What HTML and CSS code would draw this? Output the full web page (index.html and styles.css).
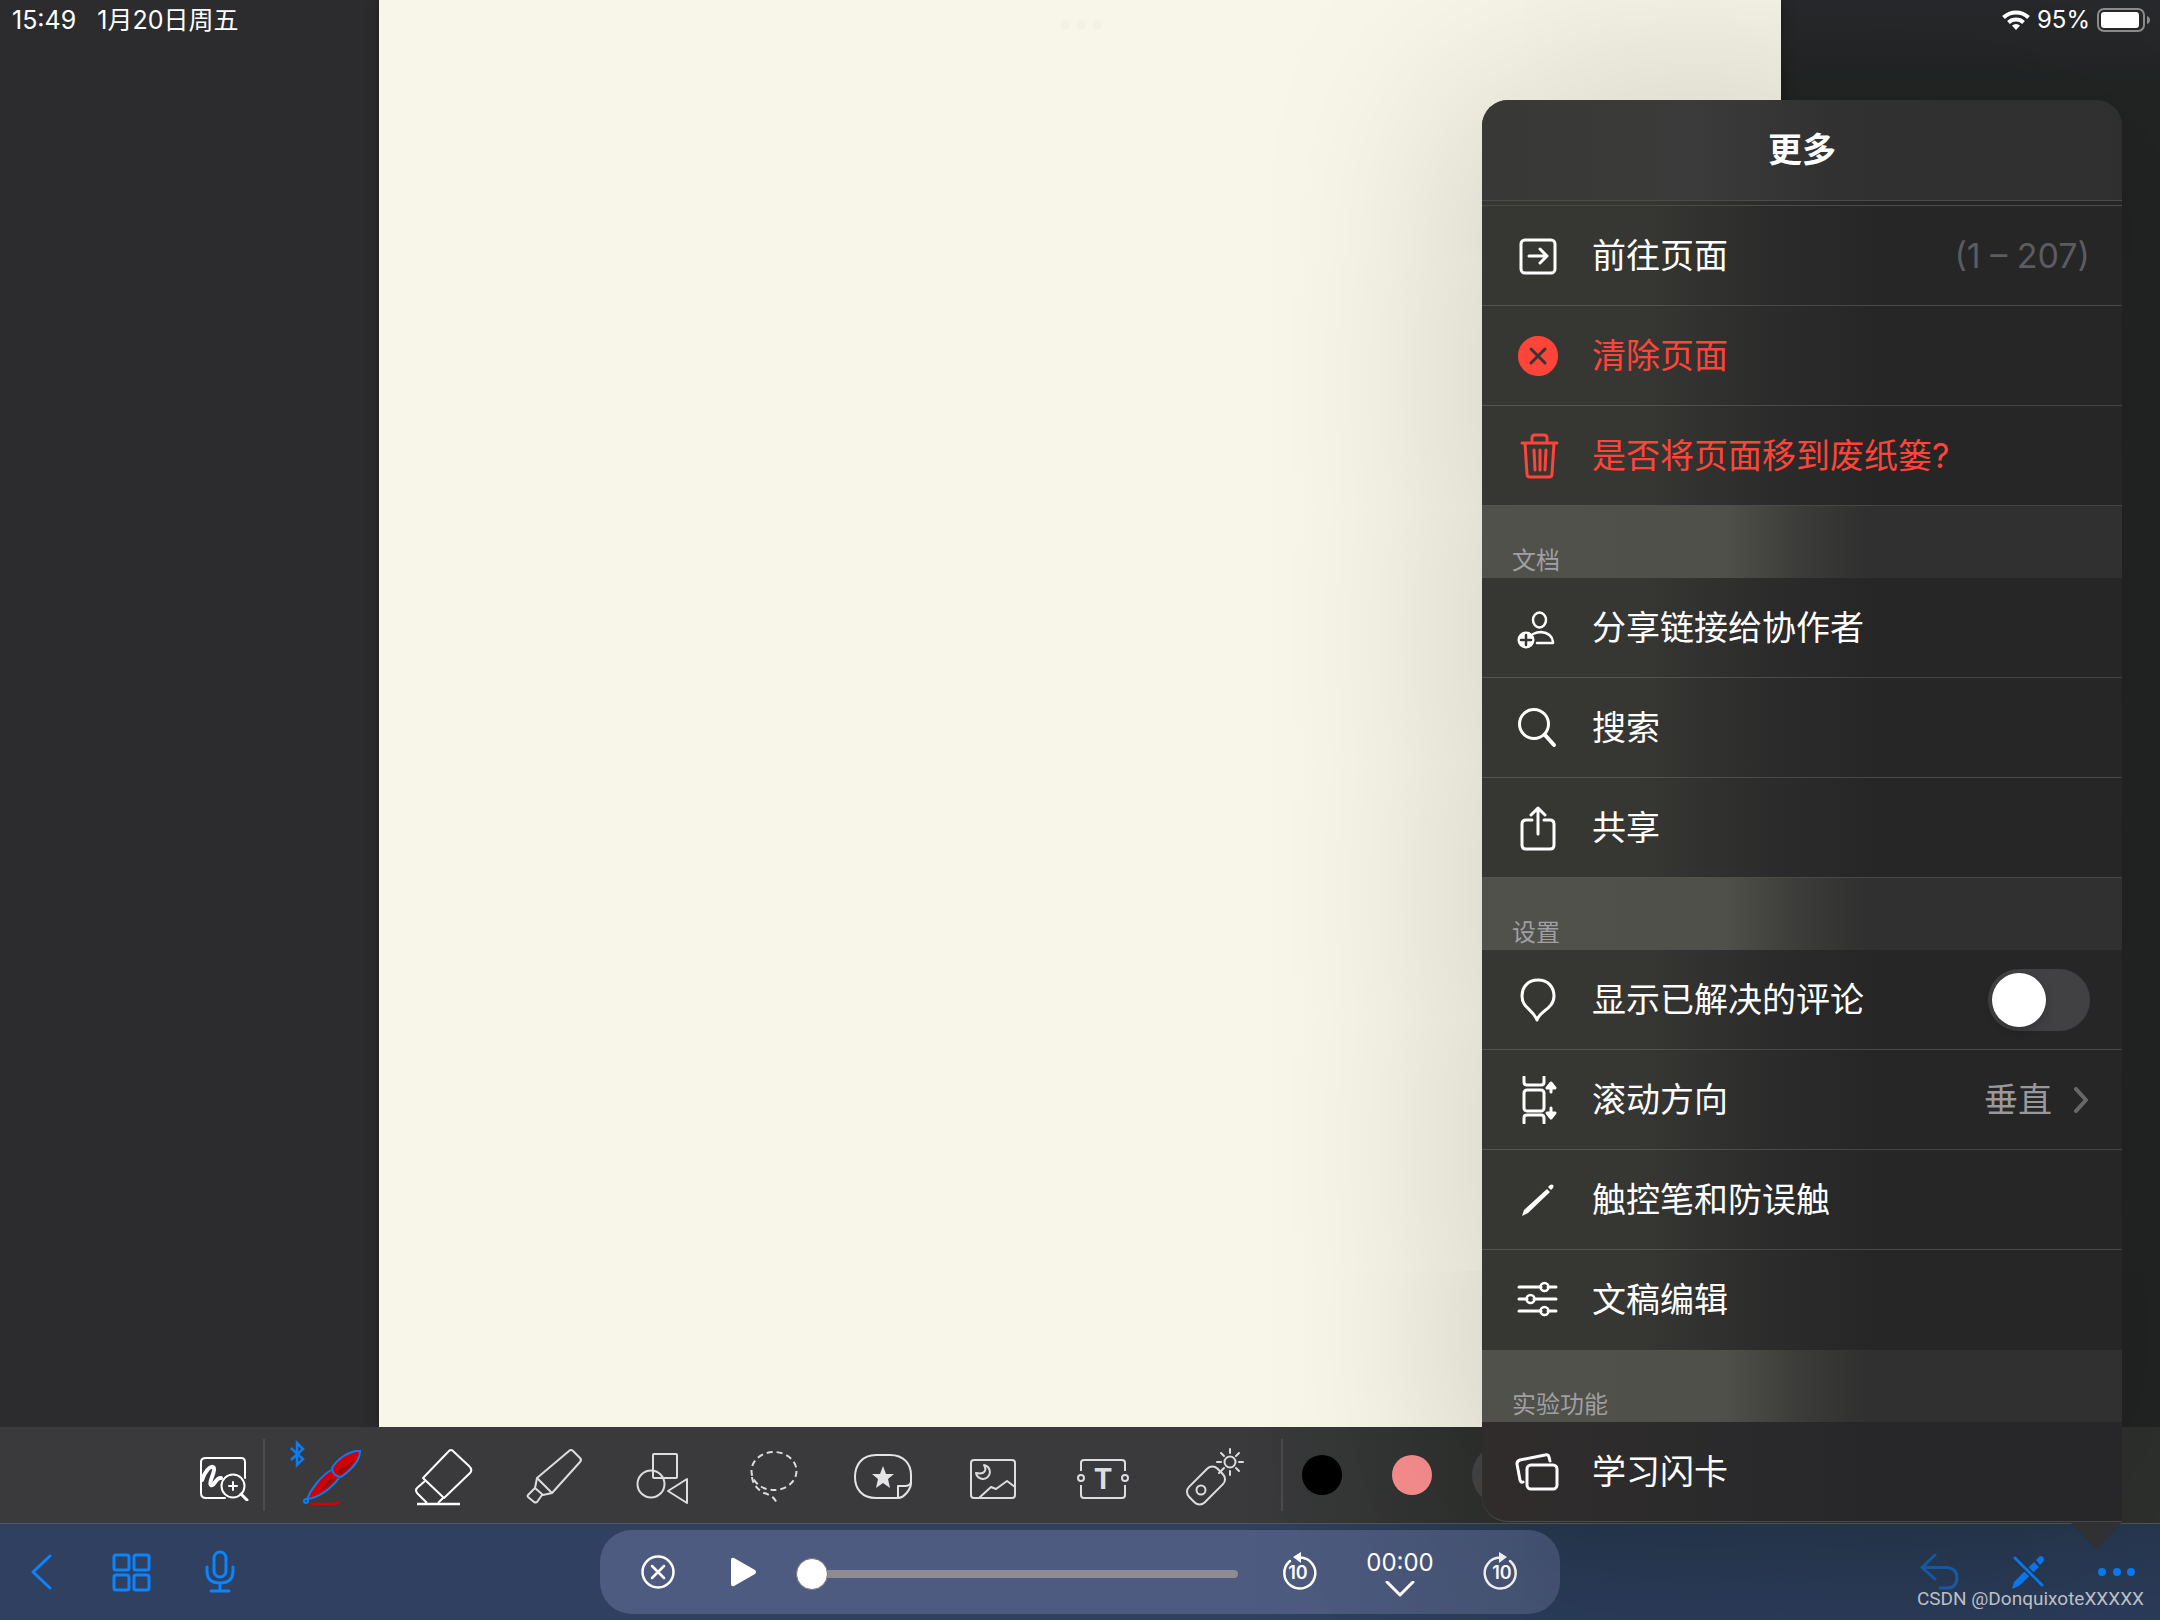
FILE: index.html
```html
<!DOCTYPE html>
<html lang="zh-CN">
  <head>
    <meta charset="UTF-8" />
    <meta name="viewport" content="width=device-width, initial-scale=1.0" />
    <title>更多</title>
    <link rel="stylesheet" href="styles.css">
  </head>
  <body>
    <div class="app">
      <header class="status">
        <div class="status-side">
          <span>15:49</span>
          <span>1月20日周五</span>
        </div>
        <div class="multitask"><i></i><i></i><i></i></div>
        <div class="status-side right">
          <svg class="wifi" width="28" height="22" viewBox="0 0 28 22" fill="none" stroke="#fff" stroke-width="4">
            <path d="M1.500 8.500a18 18 0 0 1 25 0" />
            <path d="M6.500 13.500a11 11 0 0 1 15 0" />
            <path d="M14 21l-4-4.500a6 6 0 0 1 8 0z" fill="#fff" stroke="none" />
          </svg>
          <span class="percent">95%</span>
          <svg width="53" height="24" viewBox="0 0 53 24">
            <rect x="1" y="1" width="46" height="22" rx="6" fill="none" stroke="#8b8b8b" stroke-width="2" />
            <rect x="4" y="4" width="38" height="16" rx="3" fill="#fff" />
            <path d="M50 8q3 1 3 4t-3 4z" fill="#8b8b8b" />
          </svg>
        </div>
      </header>

      <main class="canvas">
        <div class="paper"></div>
      </main>

      <nav class="toolbar">
        <button class="zoom-tool" aria-label="缩放书写">
          <svg width="52" height="52" viewBox="0 0 52 52" fill="none" stroke="#fff" stroke-width="2" stroke-linecap="round">
            <path d="M27 49H8q-5 0-5-5V13q0-4 5-4h35q4 0 4 4v16" />
            <path d="M4 31C7 22 12 17 15 18c4 2-5 16-2 18s5-8 10-7" stroke-width="4" />
            <circle cx="35" cy="37" r="11.500" />
            <path d="M43 45l6 6" stroke-width="3" />
            <path d="M35 33v8M31 37h8" />
          </svg>
        </button>
        <div class="divider"></div>
        <div class="tools">
          <button aria-label="钢笔">
            <svg viewBox="0 0 90 72" fill="none" stroke="#0a7cf5" stroke-width="2">
              <path d="M3 9l12 11-6 6V4l6 6L3 21" stroke-width="2.500" />
              <path d="M43 31C33 37 23 50 19 60c11-1 24-10 32-21" fill="#d20000" />
              <path d="M72 12C62 11 49 20 44 29c0 5 4 9 9 9 10-7 19-16 19-26z" fill="#d20000" />
              <path d="M66 22c-3 5-8 10-13 14l-4-4zM46 41c-4 4-9 9-15 12l12-14z" fill="#8f1210" stroke="none" />
              <circle cx="18" cy="62" r="2" />
              <path d="M23 65h21q5 0 7-2" stroke="#d20000" stroke-width="2.500" stroke-linecap="round" />
            </svg>
          </button>
          <button aria-label="橡皮擦">
            <svg viewBox="0 0 90 72" fill="none" stroke="#fff" stroke-width="2" stroke-linejoin="round">
              <path d="M50 13q3-4 6 0l15 14q4 4 1 7L46 59 25 39z" />
              <path d="M27 42l-8 7q-2 2 0 5l10 10M45 59l-5 5" />
              <path d="M19 65h43" stroke-width="2.500" />
            </svg>
          </button>
          <button aria-label="荧光笔">
            <svg viewBox="0 0 90 72" fill="none" stroke="#ddd" stroke-width="2" stroke-linejoin="round">
              <path d="M61 12q2-2 4 0l7 7q2 2 0 4L44 54 29 39z" />
              <path d="M29 39l-2 10 8 7 9-2M27 49l-7 7q-1 1 0 2l6 5q2 1 3 0l5-7" />
            </svg>
          </button>
          <button aria-label="形状">
            <svg viewBox="0 0 90 72" fill="none" stroke="#ddd" stroke-width="2" stroke-linejoin="round">
              <rect x="35" y="15" width="24" height="24" rx="1" />
              <circle cx="33" cy="45" r="13.500" />
              <path d="M69 40v24L50 52z" />
            </svg>
          </button>
          <button aria-label="套索">
            <svg viewBox="0 0 90 72" fill="none" stroke="#ddd" stroke-width="2" stroke-dasharray="6 4">
              <ellipse cx="46" cy="32" rx="22.500" ry="19" />
              <path d="M24 38q1 10 12 16 11 3 13 11" />
            </svg>
          </button>
          <button aria-label="贴纸">
            <svg viewBox="0 0 90 72" fill="none" stroke="#e4e4e4" stroke-width="2" stroke-linejoin="round">
              <path d="M60 59H38C24 59 17 50 17 38s7-22 21-22h14c14 0 21 9 21 20v8c0 6-7 15-13 15z" />
              <path d="M60 59V47h7q5 0 6-4" />
              <path d="M45 27l3 8h8l-6 5 2 9-7-5-7 5 2-9-6-5h8z" fill="#e4e4e4" stroke="none" />
            </svg>
          </button>
          <button aria-label="图片">
            <svg viewBox="0 0 90 72" fill="none" stroke="#ddd" stroke-width="2" stroke-linejoin="round">
              <rect x="23" y="21" width="44" height="38" rx="3" />
              <path d="M36 26a7 7 0 1 1-8 8c9 2 11-3 8-8z" />
              <path d="M31 59l12-11 5 2 11-8 8 6" />
            </svg>
          </button>
          <button aria-label="文本">
            <svg viewBox="0 0 90 72" fill="none" stroke="#ddd" stroke-width="2">
              <path d="M23 32v-8q0-3 3-3h38q3 0 3 3v8M23 46v10q0 3 3 3h38q3 0 3-3V46" />
              <circle cx="23" cy="39" r="3" />
              <circle cx="67" cy="39" r="3" />
              <text x="45" y="50" class="glyph-t">T</text>
            </svg>
          </button>
          <button aria-label="激光笔">
            <svg viewBox="0 0 90 72" fill="none" stroke="#ddd" stroke-width="2">
              <rect x="-20" y="-11" width="40" height="22" rx="7" transform="translate(38 46.500) rotate(-45)" />
              <circle cx="33" cy="51" r="4.500" />
              <circle cx="62" cy="23" r="5.500" />
              <path d="M62 10v4M62 32v4M49 23h4M71 23h4M53 14l3 3M68 29l3 3M71 14l-3 3M56 29l-5 5" stroke-linecap="round" />
            </svg>
          </button>
        </div>
        <div class="divider second"></div>
        <div class="swatches">
          <button class="swatch black" aria-label="黑色"></button>
          <button class="swatch pink" aria-label="粉色"></button>
          <button class="swatch more" aria-label="更多颜色"></button>
        </div>
      </nav>

      <footer class="bottombar">
        <div class="group">
          <button aria-label="返回">
            <svg width="48" height="48" viewBox="0 0 48 48" class="blue"><path d="M31 8L14 24l17 16" stroke-width="3" /></svg>
          </button>
          <button aria-label="缩略图">
            <svg width="48" height="48" viewBox="0 0 48 48" class="blue">
              <rect x="6" y="7" width="15" height="15" rx="2" />
              <rect x="26" y="7" width="15" height="15" rx="2" />
              <rect x="6" y="27" width="15" height="15" rx="2" />
              <rect x="26" y="27" width="15" height="15" rx="2" />
            </svg>
          </button>
          <button aria-label="录音">
            <svg width="48" height="48" viewBox="0 0 48 48" class="blue">
              <rect x="17" y="4" width="12" height="25" rx="6" />
              <path d="M10 19v4q0 12 13 12t13-12v-4M23 35v8M14 43h18" />
            </svg>
          </button>
        </div>

        <div class="player">
          <button aria-label="关闭">
            <svg width="44" height="44" viewBox="0 0 44 44" fill="none" stroke="#fff" stroke-width="2.500" stroke-linecap="round">
              <circle cx="22" cy="22" r="15.500" />
              <path d="M16 16l12 12M28 16L16 28" />
            </svg>
          </button>
          <button class="play" aria-label="播放">
            <svg width="44" height="44" viewBox="0 0 44 44"><path d="M10 10q0-3 3-2l21 12q2 2 0 4L13 36q-3 1-3-2z" fill="#fff" /></svg>
          </button>
          <input class="seek" type="range" min="0" max="100" value="0" aria-label="进度" />
          <button aria-label="后退10秒">
            <svg width="44" height="44" viewBox="0 0 44 44" fill="none" stroke="#fff" stroke-width="2.500" stroke-linecap="round">
              <path d="M24 7.500a15.500 15.500 0 1 1-10 3.500" />
              <path d="M25 2v11l-8-6z" fill="#fff" stroke="none" />
              <text x="22" y="29" class="glyph-10">10</text>
            </svg>
          </button>
          <button class="time">
            <span>00:00</span>
            <svg width="30" height="16" viewBox="0 0 30 16" fill="none" stroke="#fff" stroke-width="3" stroke-linecap="round" stroke-linejoin="round"><path d="M2 1l13 13L28 1" /></svg>
          </button>
          <button aria-label="前进10秒">
            <svg width="44" height="44" viewBox="0 0 44 44" fill="none" stroke="#f4f4f4" stroke-width="2.500" stroke-linecap="round">
              <path d="M20 7.500a15.500 15.500 0 1 0 10 3.500" />
              <path d="M19 2v11l8-6z" fill="#f4f4f4" stroke="none" />
              <text x="22" y="29" class="glyph-10">10</text>
            </svg>
          </button>
        </div>

        <div class="group end">
          <button class="undo" aria-label="撤销">
            <svg width="48" height="48" viewBox="0 0 48 48" class="blue"><path d="M20 7L7 19.500 20 31M7 19.500h23q12 0 12 10.500T30 40h-5" /></svg>
          </button>
          <button aria-label="只读模式">
            <svg width="48" height="48" viewBox="0 0 48 48">
              <path d="M8 41l2-7 20-20 5 5-20 19zM32 12l3-3q2-2 4 0t0 5l-3 3z" fill="#0a7cf5" />
              <path d="M11 10l27 27" stroke="#26374f" stroke-width="6" />
              <path d="M11 10l27 27" stroke="#0a7cf5" stroke-width="3" stroke-linecap="round" />
            </svg>
          </button>
          <button aria-label="更多">
            <svg width="48" height="48" viewBox="0 0 48 48" fill="#0a7cf5">
              <circle cx="9" cy="24" r="4" /><circle cx="24" cy="24" r="4" /><circle cx="38" cy="24" r="4" />
            </svg>
          </button>
        </div>
      </footer>

      <section class="popover">
        <h1>更多</h1>
        <div class="spacer"></div>

        <div class="row">
          <svg viewBox="0 0 48 48"><rect x="7" y="8" width="34" height="33" rx="4" /><path d="M15 24h18M26 17l7 7-7 7" /></svg>
          <label for="page-number">前往页面</label>
          <input id="page-number" class="page-number" type="text" placeholder="(1 – 207)" />
        </div>
        <button class="row danger">
          <svg viewBox="0 0 48 48"><circle cx="24" cy="24" r="18.500" fill="#ff453a" /><path d="M17 17l14 14M31 17L17 31" stroke="#363633" /></svg>
          <span>清除页面</span>
        </button>
        <button class="row danger">
          <svg viewBox="0 0 48 48"><path d="M8 11h35M18 11V6q0-3 3-3h9q3 0 3 3v5M11 11l2 31q0 3 3 3h19q3 0 3-3l2-31M20 18l1 20M26 18v20M32 18l-1 20" /></svg>
          <span>是否将页面移到废纸篓?</span>
        </button>

        <h2>文档</h2>
        <button class="row">
          <svg viewBox="0 0 48 48" class="thin">
            <ellipse cx="25.500" cy="16" rx="6.500" ry="7.500" />
            <path d="M19 30q4-2 8-2 11 1 12 10v1H23" />
            <circle cx="12" cy="36" r="8.500" fill="#fff" stroke="none" />
            <path d="M12 31v10M7 36h10" stroke="#363633" />
          </svg>
          <span>分享链接给协作者</span>
        </button>
        <button class="row">
          <svg viewBox="0 0 48 48"><circle cx="20" cy="20" r="14.500" /><path d="M31 31l9 10" stroke-width="4" /></svg>
          <span>搜索</span>
        </button>
        <button class="row">
          <svg viewBox="0 0 48 48"><path d="M18 16h-6q-4 0-4 4v21q0 4 4 4h24q4 0 4-4V20q0-4-4-4h-6M24 4v26M17 11l7-7 7 7" /></svg>
          <span>共享</span>
        </button>

        <h2>设置</h2>
        <div class="row">
          <svg viewBox="0 0 48 48"><path d="M24 4C14 4 8 11 8 20c0 12 11 13 15 24 2-9 17-11 17-24C40 11 34 4 24 4z" /></svg>
          <label for="resolved">显示已解决的评论</label>
          <input id="resolved" class="switch" type="checkbox" />
        </div>
        <button class="row">
          <svg viewBox="0 0 48 48">
            <rect x="10" y="14" width="20" height="21" rx="3" />
            <path d="M10 1v5q0 3 3 3h14q3 0 3-3V1M10 47v-5q0-3 3-3h14q3 0 3 3v5" />
            <path d="M37 16V9M33 12l4-5 4 5zM37 32v8M33 37l4 5 4-5z" fill="#fff" />
          </svg>
          <span>滚动方向</span>
          <span class="value">垂直</span>
          <svg class="chevron" viewBox="0 0 14 26"><path d="M2 2l10 11L2 24" /></svg>
        </button>
        <button class="row">
          <svg viewBox="0 0 48 48"><path d="M8 40l2-6 23-21 3 3-22 21zM34 11l2-2q2-1 3 0t0 3l-2 2z" fill="#fff" stroke="none" /></svg>
          <span>触控笔和防误触</span>
        </button>
        <button class="row no-line">
          <svg viewBox="0 0 48 48">
            <path d="M5 11h22M34 11h8M5 23h8M20 23h22M5 35h22M34 35h8" />
            <g class="thin"><circle cx="30.500" cy="11" r="4" /><circle cx="16.500" cy="23" r="4" /><circle cx="30.500" cy="35" r="4" /></g>
          </svg>
          <span>文稿编辑</span>
        </button>

        <h2>实验功能</h2>
        <button class="row last">
          <svg viewBox="0 0 48 48"><rect x="13" y="17" width="30" height="24" rx="4" /><path d="M36 13l-1-4q-1-3-4-2L6 12q-3 1-3 4l3 16q1 3 3 2" /></svg>
          <span>学习闪卡</span>
        </button>
        <div class="arrow"></div>
      </section>

      <p class="watermark">CSDN @DonquixoteXXXXX</p>
    </div>
  </body>
</html>
```

FILE: styles.css
```css
* {
  padding: 0;
  margin: 0;
  box-sizing: border-box;
}
body {
  font-family: Inter, "Noto Sans CJK SC", sans-serif;
  color: #fff;
  background: #2c2c2e;
}
button,
input {
  font: inherit;
  color: inherit;
  background: none;
  border: none;
  outline: none;
}
svg {
  display: block;
  flex: none;
}
.app {
  position: relative;
  min-height: 100vh;
  display: flex;
  flex-direction: column;
  overflow: hidden;
}

/* status bar floats over the paper */
.status {
  position: absolute;
  top: 0;
  left: 0;
  right: 0;
  z-index: 3;
  height: 40px;
  padding: 0 10px 0 12px;
  display: grid;
  grid-template-columns: 1fr auto 1fr;
  align-items: center;
  font-size: 25px;
  line-height: 40px;
}
.status-side {
  display: flex;
  align-items: center;
  gap: 21px;
}
.status-side.right {
  justify-content: flex-end;
  gap: 7px;
}
.percent {
  font-size: 24px;
}
.multitask {
  display: flex;
  gap: 6px;
  padding-top: 10px;
}
.multitask i {
  width: 10px;
  height: 10px;
  border-radius: 50%;
  background: #f2f3e3;
}

.canvas {
  flex: 1;
  display: flex;
  padding: 0 379px;
  background:
    linear-gradient(#28292c, #222524 100px) right / 379px 100% no-repeat,
    #2c2c2e;
}
.paper {
  flex: 1;
  background: #f8f6e8;
  box-shadow: 0 0 12px rgba(0, 0, 0, 0.35);
}

/* drawing tools */
.toolbar {
  position: relative;
  height: 97px;
  display: flex;
  align-items: center;
  padding-left: 198px;
  background: linear-gradient(90deg, #3a3a3c 0, #3a3a3c calc(100% - 920px), #2f312f calc(100% - 690px), #2f312f);
  border-bottom: 1px solid #585552;
}
.zoom-tool {
  width: 52px;
}
.divider {
  width: 2px;
  height: 72px;
  margin: 0 13px;
  background: #4b4b4d;
}
.divider.second {
  margin-right: 19px;
}
.tools {
  display: flex;
}
.tools button {
  width: 110px;
  padding: 0 10px;
}
.tools svg {
  width: 90px;
  height: 72px;
}
.glyph-t {
  font-size: 28px;
  font-weight: 700;
  text-anchor: middle;
  fill: #ddd;
  stroke: none;
}
.glyph-10 {
  font-size: 18px;
  font-weight: 600;
  text-anchor: middle;
  fill: #fff;
  stroke: none;
}
.swatches {
  display: flex;
  align-items: center;
  gap: 50px;
}
.swatch {
  width: 40px;
  height: 40px;
  border-radius: 50%;
}
.black {
  background: #000;
}
.pink {
  background: #f98e8e;
}
.more {
  width: 60px;
  height: 60px;
  margin-left: -10px;
  background: #444546;
}

/* navigation and audio player */
.bottombar {
  height: 96px;
  display: grid;
  grid-template-columns: 1fr minmax(0, 960px) 1fr;
  align-items: center;
  background: linear-gradient(90deg, #304060 0, #304060 calc(100% - 920px), transparent calc(100% - 640px)),
    linear-gradient(#26384f, #2b3c5a);
}
.group {
  display: flex;
  gap: 41px;
  padding: 0 19px;
}
.group.end {
  justify-content: flex-end;
}
.blue {
  fill: none;
  stroke: #0a84ff;
  stroke-width: 3;
  stroke-linecap: round;
  stroke-linejoin: round;
}
.undo {
  opacity: 0.5;
}
.player {
  height: 84px;
  padding: 0 36px;
  display: flex;
  align-items: center;
  border-radius: 32px;
  background: linear-gradient(90deg, #4e5b80 0, #4e5b80 68%, #455373);
}
.play {
  margin-left: 41px;
}
.seek {
  appearance: none;
  flex: 1;
  min-width: 0;
  height: 32px;
  margin: 3px 38px 0 31px;
}
.seek::-webkit-slider-runnable-track {
  height: 8px;
  border-radius: 4px;
  background: #8e8c91;
}
.seek::-webkit-slider-thumb {
  appearance: none;
  width: 32px;
  height: 32px;
  margin-top: -12px;
  border-radius: 50%;
  border: 1px solid #77757a;
  background: #fff;
}
.time {
  width: 72px;
  margin: 0 44px;
  display: flex;
  flex-direction: column;
  align-items: center;
  gap: 3px;
  font-size: 24px;
  line-height: 30px;
}

/* "more" menu */
.popover {
  position: absolute;
  right: 38px;
  bottom: 98px;
  z-index: 2;
  width: 640px;
  border-radius: 26px 26px 0 26px;
  background: linear-gradient(90deg, #363633 0, #363633 25%, #2b2b2b 46%, #262626 62%);
  box-shadow: 0 0 220px rgba(0, 0, 0, 0.22);
}
.popover h1 {
  height: 101px;
  border-bottom: 1px solid #4b4b49;
  border-radius: 26px 26px 0 0;
  background: linear-gradient(90deg, #383836 0, #3b3b3b 33%, #303130 55%, #2f2f2f);
  font-size: 34px;
  line-height: 100px;
  font-weight: 700;
  text-align: center;
}
.spacer {
  height: 5px;
  border-bottom: 1px solid #4b4b49;
}
.popover h2 {
  height: 72px;
  padding: 38px 30px 0;
  background: linear-gradient(90deg, #50514a 0, #4f5049 38%, #3b3b39 50%, #303030 60%);
  color: #a09fa3;
  font-size: 24px;
  line-height: 34px;
  font-weight: 400;
}
.row {
  width: 100%;
  height: 100px;
  padding: 0 32px;
  display: flex;
  align-items: center;
  border-bottom: 1px solid rgba(255, 255, 255, 0.15);
  font-size: 34px;
  line-height: 48px;
  text-align: left;
}
.row svg {
  width: 48px;
  height: 48px;
  margin-right: 30px;
  fill: none;
  stroke: #fff;
  stroke-width: 3;
  stroke-linecap: round;
  stroke-linejoin: round;
}
.row .thin {
  stroke-width: 2.5px;
}
.row label {
  flex: 1;
}
.danger {
  color: #ff453a;
}
.row.danger svg {
  stroke: #ff453a;
}
.no-line {
  border-bottom-color: transparent;
}
.last {
  border-radius: 0 0 0 26px;
  background: linear-gradient(90deg, #302c2c 0, #2c2b2c 30%, #272629 60%);
}
.page-number {
  width: 200px;
  text-align: right;
}
.page-number::placeholder {
  color: #5c5b60;
}
.switch {
  appearance: none;
  width: 102px;
  height: 62px;
  padding: 4px;
  border-radius: 31px;
  background: #414143;
}
.switch::before {
  content: "";
  display: block;
  width: 54px;
  height: 54px;
  border-radius: 50%;
  background: #fff;
  box-shadow: 0 4px 10px rgba(0, 0, 0, 0.2);
}
.value {
  margin-left: auto;
  color: #99989d;
}
.row .chevron {
  width: 14px;
  height: 26px;
  margin: 0 2px 0 22px;
  stroke: #68686b;
  stroke-width: 4;
}
.arrow {
  position: absolute;
  top: 100%;
  right: 0;
  width: 52px;
  height: 26px;
  background: #303133;
  clip-path: polygon(0 0, 100% 0, 55% 94%, 50% 100%, 45% 94%);
}

.watermark {
  position: absolute;
  right: 16px;
  bottom: 9px;
  z-index: 3;
  color: #bcbfc4;
  font-family: Roboto, sans-serif;
  font-size: 19px;
  line-height: 24px;
}
```
